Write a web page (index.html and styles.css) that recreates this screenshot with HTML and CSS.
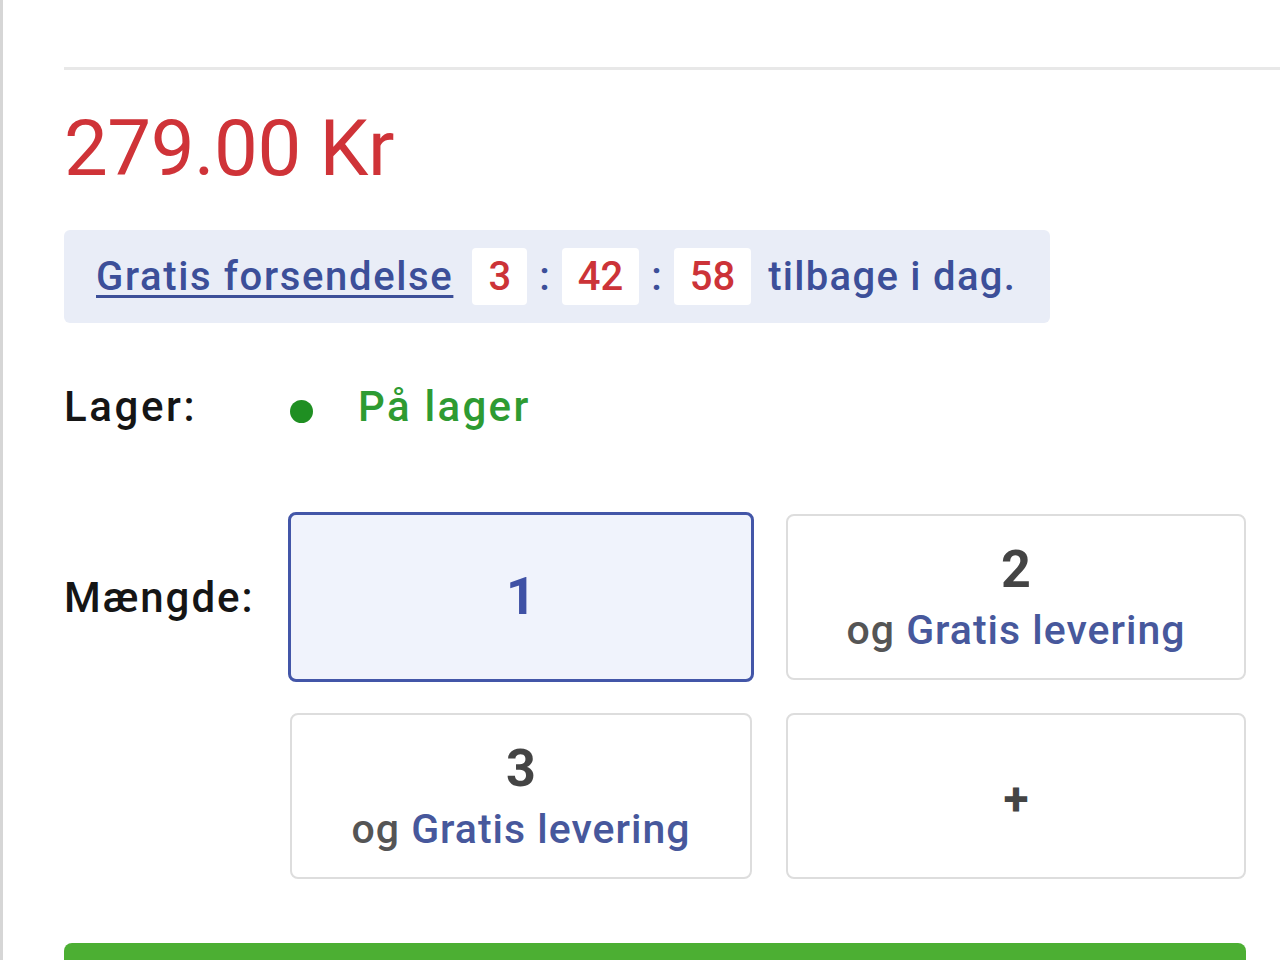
FILE: index.html
```html
<!DOCTYPE html>
<html lang="da">
<head>
<meta charset="utf-8">
<title>Produkt</title>
<link rel="stylesheet" href="styles.css">
</head>
<body>
<div class="page">
  <div class="rule"></div>
  <div class="price">279.00 Kr</div>
  <div class="banner">
    <a class="link" href="#">Gratis forsendelse</a>
    <span class="tbox">3</span>
    <span class="colon">:</span>
    <span class="tbox">42</span>
    <span class="colon">:</span>
    <span class="tbox">58</span>
    <span class="rest">tilbage i dag.</span>
  </div>
  <div class="stock">
    <div class="label">Lager:</div>
    <span class="dot"></span>
    <span class="instock">På lager</span>
  </div>
  <div class="qty">
    <div class="label qlabel">Mængde:</div>
    <div class="opt selected"><span class="num">1</span></div>
    <div class="opt"><span class="num">2</span><span class="sub">og <span class="free">Gratis levering</span></span></div>
    <div class="opt opt3"><span class="num">3</span><span class="sub">og <span class="free">Gratis levering</span></span></div>
    <div class="opt"><span class="plus">+</span></div>
  </div>
  <div class="buy"></div>
</div>
</body>
</html>
```

FILE: styles.css
```css
html, body {
  margin: 0;
  padding: 0;
  background: #ffffff;
  height: 960px;
  overflow: hidden;
}
body {
  font-family: Roboto, "Liberation Sans", sans-serif;
}
.page {
  border-left: 3px solid #d6d6d6;
  height: 960px;
  box-sizing: border-box;
  padding-left: 61px;
  padding-top: 67px;
  overflow: hidden;
}
.rule {
  height: 3px;
  background: #e8e8e8;
}
.price {
  margin-top: 40px;
  font-size: 78px;
  line-height: 78px;
  color: #cf3338;
  letter-spacing: -0.5px;
}
.banner {
  margin-top: 42px;
  width: 986px;
  height: 93px;
  box-sizing: border-box;
  background: #e9edf7;
  border-radius: 6px;
  display: flex;
  align-items: center;
  padding-left: 32px;
  font-size: 40px;
  font-weight: 500;
  color: #3c4f99;
}
.link {
  color: #3c4f99;
  text-decoration: underline;
  text-decoration-thickness: 3px;
  text-underline-offset: 5px;
  margin-right: 19px;
  letter-spacing: 1.65px;
}
.tbox {
  background: #ffffff;
  color: #cc3338;
  height: 57px;
  padding: 0 16px;
  border-radius: 4px;
  display: flex;
  align-items: center;
}
.colon {
  margin: 0 12px;
  color: #3c4f99;
}
.rest {
  margin-left: 17px;
  letter-spacing: 1.3px;
}
.stock {
  margin-top: 55px;
  display: flex;
  align-items: center;
  height: 56px;
}
.label {
  width: 224px;
  font-size: 42px;
  font-weight: 500;
  color: #151515;
  letter-spacing: 2.6px;
}
.dot {
  width: 23px;
  height: 23px;
  border-radius: 50%;
  background: #1f8f22;
  margin-left: 2px;
  margin-right: 45px;
  margin-top: 10px;
}
.instock {
  font-size: 42px;
  font-weight: 500;
  color: #2e9b32;
  letter-spacing: 2.3px;
}
.qty {
  margin-top: 80px;
  display: grid;
  grid-template-columns: 192px 462px 460px;
  grid-template-rows: 166px 166px;
  column-gap: 34px;
  row-gap: 33px;
}
.qlabel {
  width: auto;
  align-self: center;
  letter-spacing: 2px;
}
.opt {
  border: 2px solid #dddddd;
  border-radius: 8px;
  display: flex;
  flex-direction: column;
  align-items: center;
  justify-content: center;
  background: #ffffff;
  padding-top: 6px;
  box-sizing: border-box;
}
.opt3 {
  grid-column: 2;
}
.selected {
  margin: -2px;
  border: 3px solid #4356a8;
  background: #f0f3fc;
  padding-top: 0;
}
.num {
  font-size: 52px;
  line-height: 56px;
  font-weight: 700;
  color: #444444;
}
.selected .num {
  color: #3f51a5;
}
.sub {
  margin-top: 4px;
  font-size: 41px;
  line-height: 56px;
  font-weight: 500;
  color: #555555;
  letter-spacing: 1px;
}
.free {
  color: #47589c;
}
.plus {
  font-size: 46px;
  font-weight: 700;
  color: #444444;
  line-height: 50px;
}
.buy {
  margin-top: 64px;
  width: 1182px;
  height: 60px;
  background: #4caf33;
  border-radius: 8px 8px 0 0;
}
```
